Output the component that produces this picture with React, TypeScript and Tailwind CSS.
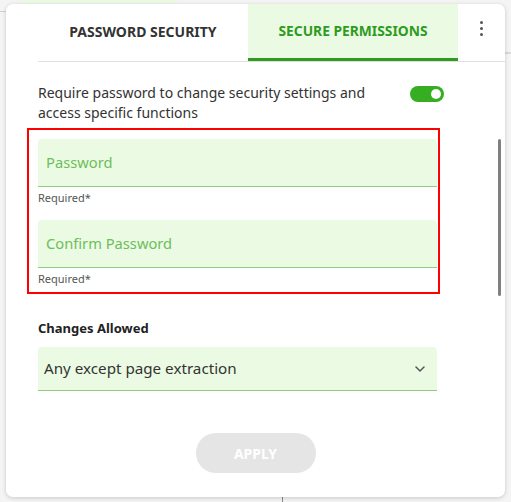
import React from "react";

function Field({ label }: { label: string }) {
  return (
    <div className="flex flex-col">
      <div className="h-[48px] bg-[#ebfbe3] rounded-t-[4px] border-b border-[#8fcc7e] flex items-center pl-[8px]">
        <span className="text-[14.7px] text-[#6dbd5c]">{label}</span>
      </div>
      <div className="mt-[4px] text-[11px] leading-[14px] text-[#555555]">Required*</div>
    </div>
  );
}

export default function App() {
  return (
    <div
      className="relative w-[511px] h-[502px] bg-[#f4f4f4] overflow-hidden"
      style={{ fontFamily: '"Noto Sans", "Open Sans", sans-serif' }}
    >
      {/* background hints */}
      <div className="absolute left-[15px] top-[-10px] w-[168px] h-[13px] rounded-b-[10px] bg-[#eafae3]" />
      <div className="absolute left-0 top-[11px] w-[6px] h-px bg-[#cfcfcf]" />
      <div className="absolute right-0 top-[52px] w-[6px] h-[2px] bg-[#d8d8d8]" />
      <div className="absolute left-[282px] top-[495px] w-px h-[7px] bg-[#888888]" />

      {/* card */}
      <div className="absolute left-[6px] top-[4px] w-[499px] h-[493px] bg-white rounded-[7px] shadow-[0_1px_4px_rgba(0,0,0,0.18)] flex flex-col">
        {/* tabs */}
        <div className="flex pl-[32px]">
          <div className="flex flex-1 border-b border-[#e0e0e0]">
            <div className="w-[210px] h-[57px] flex items-center justify-center text-[14px] font-bold text-[#333333] pb-[3px]">
              PASSWORD SECURITY
            </div>
            <div className="w-[210px] h-[57px] flex items-center justify-center text-[13.8px] font-bold text-[#2e9b1f] bg-[#ebfbe3] border-b-[3px] border-[#2e9b1f]">
              SECURE PERMISSIONS
            </div>
            <div className="flex-1 flex justify-center pt-[17px]">
              <div className="flex flex-col gap-[3px] items-center">
                <span className="w-[3px] h-[3px] rounded-full bg-[#555555]" />
                <span className="w-[3px] h-[3px] rounded-full bg-[#555555]" />
                <span className="w-[3px] h-[3px] rounded-full bg-[#555555]" />
              </div>
            </div>
          </div>
        </div>

        {/* content */}
        <div className="relative flex-1 flex flex-col pl-[32px]">
          <div className="absolute left-[492px] top-[77px] w-[3px] h-[157px] rounded-full bg-[#808080]" />

          <div className="flex items-start mt-[21px]">
            <div className="w-[362px] text-[14px] leading-[20px] text-[#333333]">
              Require password to change security settings and access specific functions
            </div>
            <div className="ml-[10px] mt-[3px] w-[34px] h-[16px] rounded-full bg-[#35ae22] flex items-center justify-end pr-[3px]">
              <span className="w-[10px] h-[10px] rounded-full bg-white" />
            </div>
          </div>

          <div className="ml-[-11px] mt-[5px] w-[413px] border-2 border-[#ff0000] pl-[9px] pr-px pt-[9px] pb-[6px] flex flex-col gap-[15px]">
            <Field label="Password" />
            <Field label="Confirm Password" />
          </div>

          <div className="mt-[25px] text-[13px] leading-[18px] font-bold text-[#222222]">Changes Allowed</div>

          <div className="mt-[10px] w-[399px] h-[44px] bg-[#ebfbe3] rounded-t-[4px] border-b border-[#8fcc7e] flex items-center justify-between pl-[6px] pr-[12px]">
            <span className="text-[15.2px] text-[#333333]">Any except page extraction</span>
            <svg width="10" height="6" viewBox="0 0 10 6" fill="none">
              <path d="M1 1l4 4 4-4" stroke="#555555" strokeWidth="1.5" strokeLinecap="round" strokeLinejoin="round" />
            </svg>
          </div>

          <div className="mt-[42px] ml-[-32px] flex justify-center">
            <div className="w-[120px] h-[40px] rounded-full bg-[#e5e5e5] flex items-center justify-center text-[14px] font-bold text-white">
              APPLY
            </div>
          </div>
        </div>
      </div>
    </div>
  );
}
